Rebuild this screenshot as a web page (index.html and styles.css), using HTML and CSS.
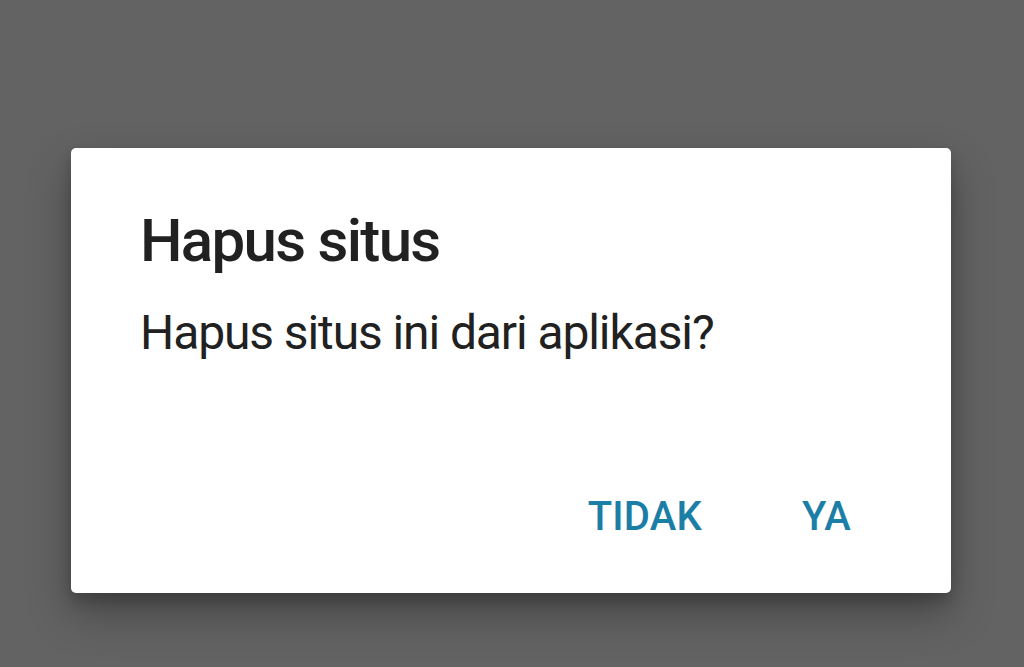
FILE: index.html
```html
<!DOCTYPE html>
<html lang="id">
<head>
<meta charset="utf-8">
<title>Hapus situs</title>
<link rel="stylesheet" href="styles.css">
</head>
<body>
<div class="scrim">
  <div class="dialog">
    <h1 class="title">Hapus situs</h1>
    <p class="message">Hapus situs ini dari aplikasi?</p>
    <div class="actions">
      <button class="btn">Tidak</button>
      <button class="btn">Ya</button>
    </div>
  </div>
</div>
</body>
</html>
```

FILE: styles.css
```css
html, body {
  margin: 0;
  padding: 0;
  height: 100%;
}
body {
  background: #636363;
  font-family: Roboto, "Noto Sans", sans-serif;
}
.scrim {
  padding: 148px 0 0 71px;
}
.dialog {
  width: 880px;
  height: 445px;
  box-sizing: border-box;
  background: #ffffff;
  border-radius: 5px;
  box-shadow: 0 20px 44px rgba(0,0,0,0.3), 0 8px 14px rgba(0,0,0,0.18);
  padding: 57px 0 0 69px;
  display: flex;
  flex-direction: column;
}
.title {
  margin: 0;
  font-size: 60px;
  font-weight: 500;
  line-height: normal;
  letter-spacing: -1.7px;
  color: #212121;
}
.message {
  margin: 28px 0 0;
  font-size: 48px;
  font-weight: 400;
  line-height: normal;
  letter-spacing: -1.1px;
  color: #212121;
}
.actions {
  margin-top: auto;
  margin-bottom: 53px;
  display: flex;
  justify-content: flex-end;
  gap: 52px;
  padding-right: 76px;
}
.btn {
  border: 0;
  background: none;
  padding: 0 24px;
  font-family: Roboto, "Noto Sans", sans-serif;
  font-size: 40px;
  font-weight: 500;
  line-height: normal;
  text-transform: uppercase;
  color: #1b7ea6;
  letter-spacing: 0.2px;
}
```
